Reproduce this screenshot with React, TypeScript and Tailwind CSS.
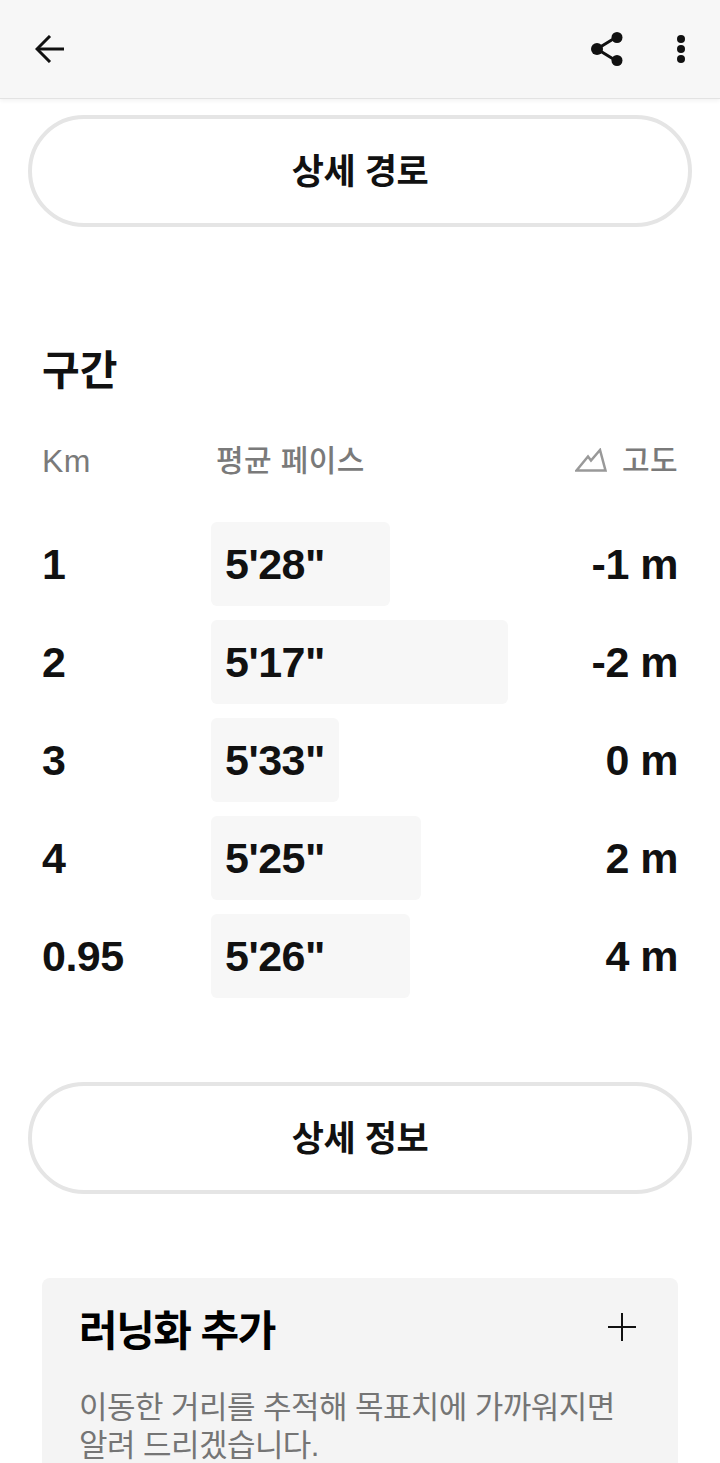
const kr = "font-['Liberation_Sans','Noto_Sans_CJK_KR',sans-serif]";

const splits = [
  { km: "1", pace: "5'28\"", width: 179, elev: "-1 m" },
  { km: "2", pace: "5'17\"", width: 297, elev: "-2 m" },
  { km: "3", pace: "5'33\"", width: 128, elev: "0 m" },
  { km: "4", pace: "5'25\"", width: 210, elev: "2 m" },
  { km: "0.95", pace: "5'26\"", width: 199, elev: "4 m" },
];

const OutlineButton = ({ label }: { label: string }) => (
  <button className="mx-7 flex h-[112px] w-[664px] items-center justify-center rounded-[56px] border-4 border-[#e5e5e5] bg-white pt-[2px] text-[35px] font-bold tracking-[-0.4px] text-[#111111]">
    {label}
  </button>
);

export default function App() {
  return (
    <div className={`${kr} h-[1463px] w-[720px] overflow-hidden bg-white`}>
      {/* Top bar */}
      <header className="flex h-[99px] items-center justify-between border-b border-[#e3e3e3] bg-[#f7f7f7] pl-[35px] pr-[35px] shadow-[0_2px_4px_rgba(0,0,0,0.05)]">
        <svg width="29" height="28" viewBox="0 0 29 28" fill="none" stroke="#111111" strokeWidth="3">
          <path d="M29 14 H2" />
          <path d="M15 1 L2 14 L15 27" />
        </svg>
        <div className="flex items-center gap-[53px]">
          <svg width="34" height="34" viewBox="0 0 34 34" className="text-[#111111]">
            <path d="M26.5 5 L7 17 L26.5 29" fill="none" stroke="currentColor" strokeWidth="3" />
            <circle cx="27" cy="5.5" r="5.5" fill="currentColor" />
            <circle cx="7" cy="17" r="6" fill="currentColor" />
            <circle cx="27" cy="28.5" r="5.5" fill="currentColor" />
          </svg>
          <div className="flex flex-col gap-[2px]">
            <span className="h-[8px] w-[8px] rounded-full bg-[#111111]" />
            <span className="h-[8px] w-[8px] rounded-full bg-[#111111]" />
            <span className="h-[8px] w-[8px] rounded-full bg-[#111111]" />
          </div>
        </div>
      </header>

      <div className="pt-4">
        <OutlineButton label="상세 경로" />
      </div>

      {/* Splits */}
      <section className="px-[42px] pt-[119px]">
        <h2 className="text-[41px] leading-[50px] font-bold text-[#111111]">구간</h2>
        <div className="mt-[44px] flex h-[40px] items-center text-[30px] font-medium tracking-[0.4px] text-[#7a7a7a]">
          <span className="w-[174px] pt-[1px] text-[32px]">Km</span>
          <span className="flex-1">평균 페이스</span>
          <span className="flex items-center gap-[15px]">
            <svg width="32" height="24" viewBox="0 0 32 24" fill="none" stroke="#999999" strokeWidth="2.5">
              <path d="M1.5 22.5 L13 8.5 L16 12.5 L25 2 L30.5 22.5 Z" />
            </svg>
            고도
          </span>
        </div>
        <div className="mt-[42px] flex flex-col gap-[14px]">
          {splits.map((s) => (
            <div key={s.pace} className="flex h-[84px] items-center text-[43px] font-bold tracking-[-0.5px] text-[#111111]">
              <span className="w-[169px]">{s.km}</span>
              <div className="flex-1">
                <div className="flex h-[84px] items-center rounded-[6px] bg-[#f7f7f7] pl-[14px]" style={{ width: s.width }}>
                  {s.pace}
                </div>
              </div>
              <span>{s.elev}</span>
            </div>
          ))}
        </div>
      </section>

      <div className="pt-[84px]">
        <OutlineButton label="상세 정보" />
      </div>

      {/* Add shoes card */}
      <section className="mx-[42px] mt-[84px] h-[300px] rounded-[8px] bg-[#f4f4f4] pl-[37px] pr-[42px] pt-[28px]">
        <div className="flex items-start justify-between">
          <h3 className="text-[42px] leading-[52px] font-bold tracking-[-1.5px] text-black">러닝화 추가</h3>
          <svg width="28" height="28" viewBox="0 0 28 28" stroke="#111111" strokeWidth="2" className="mt-[7px]">
            <path d="M14 0 V28 M0 14 H28" />
          </svg>
        </div>
        <p className="mt-[31px] whitespace-nowrap text-[31px] leading-[38px] tracking-[-0.55px] text-[#757575]">
          이동한 거리를 추적해 목표치에 가까워지면
          <br />
          알려 드리겠습니다.
        </p>
      </section>
    </div>
  );
}
